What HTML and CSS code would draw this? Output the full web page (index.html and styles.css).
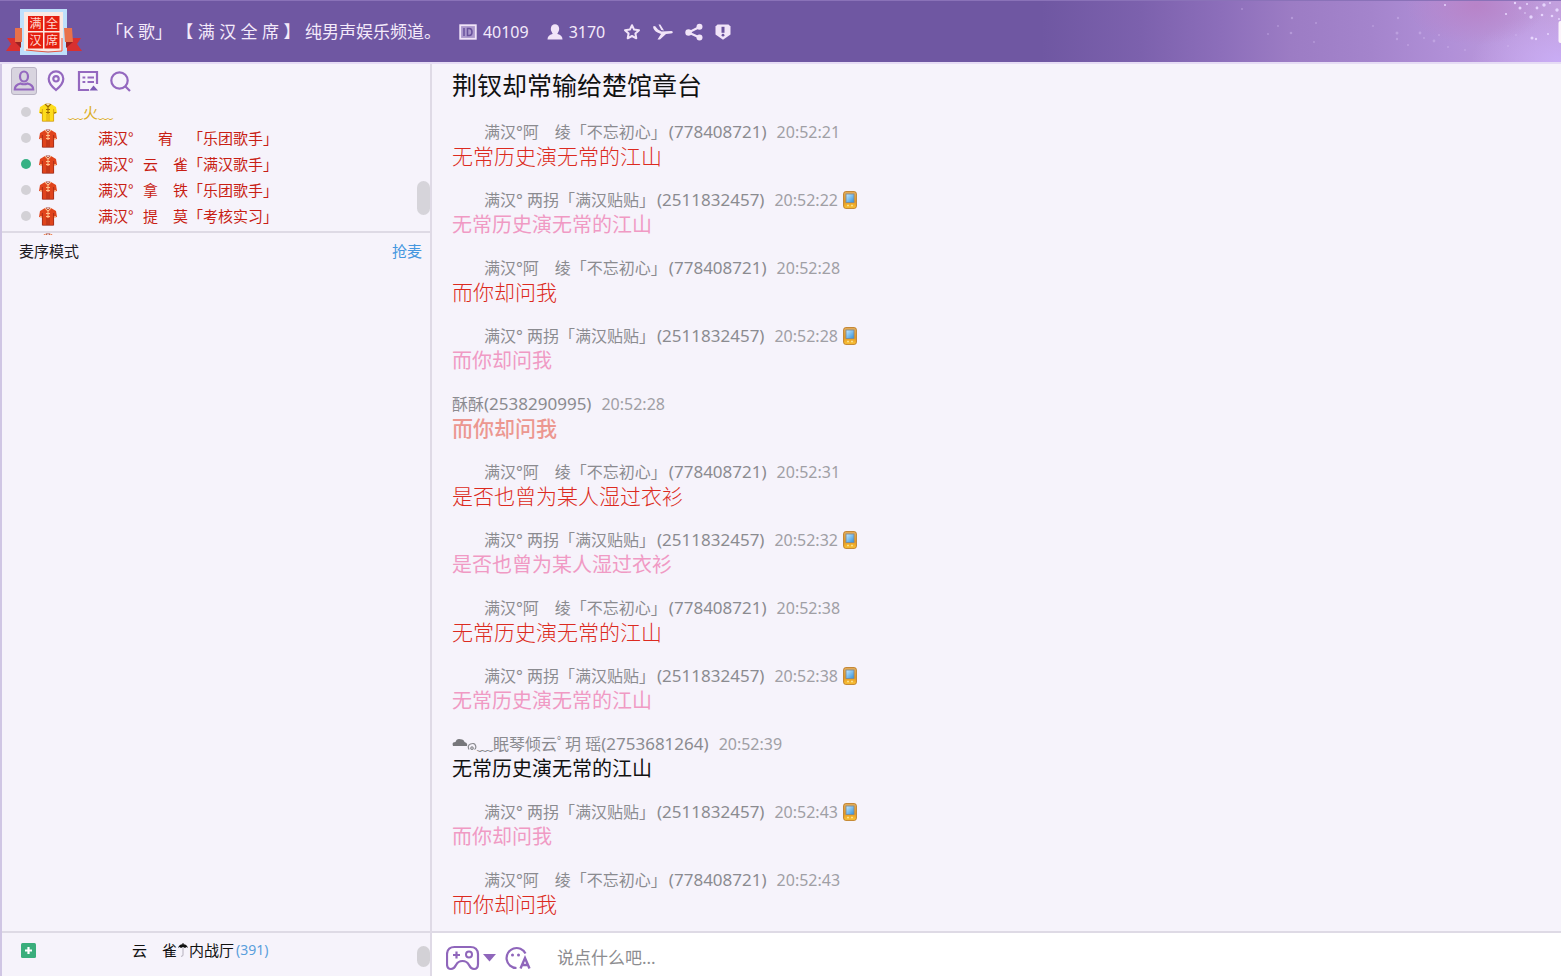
FILE: index.html
```html
<!DOCTYPE html>
<html lang="zh-CN">
<head>
<meta charset="utf-8">
<title>「K歌」【 满 汉 全 席 】纯男声娱乐频道。</title>
<link rel="stylesheet" href="styles.css">
</head>
<body>
<svg class="defs" width="0" height="0" aria-hidden="true">
  <defs>
    <linearGradient id="phoneBody" x1="0" y1="0" x2="0" y2="1"><stop offset="0" stop-color="#e6b060"/><stop offset=".6" stop-color="#e69a22"/><stop offset="1" stop-color="#fbc436"/></linearGradient>
    <linearGradient id="phoneScreen" x1="0" y1="0" x2="1" y2="1"><stop offset="0" stop-color="#c8ebff"/><stop offset="1" stop-color="#2f90dc"/></linearGradient>
  </defs>
  <symbol id="phone" viewBox="0 0 14 18">
    <rect x=".6" y=".6" width="12.8" height="16.8" rx="2.2" fill="url(#phoneBody)" stroke="#c0812c" stroke-width="1"/>
    <rect x="3" y="3" width="8" height="8.5" fill="url(#phoneScreen)" stroke="#7d8a94" stroke-width=".9"/>
    <path d="M4 14.5h2M8 14.5h2" stroke="#fbe08a" stroke-width="1.4"/>
  </symbol>
  <symbol id="shirt" viewBox="0 0 18 19">
    <path d="M6 1 1 4 0 10l3 .6V18h12v-7.4l3-.6-1-6-5-3-3 1.5z" fill="currentColor"/>
    <path class="shirt-shade" d="M3.4 6V18.3h11.200V6M8 11v7M10 11v7" fill="none" stroke-width=".8"/>
    <path class="shirt-trim" d="M6 1.2 9 4l3-2.800M9 4v7M7 6.500h4M7 9.500h4M1 9.500l2 .6M17 9.500l-2 .6" fill="none" stroke-width="1.1"/>
    <path class="shirt-shade" d="M7 .8h4L9 3z" stroke-width=".6"/>
  </symbol>
</svg>

<div class="app">
  <header class="topbar">
    <svg class="sparkles" viewBox="0 0 431 62" preserveAspectRatio="xMaxYMid slice" aria-hidden="true">
      <g fill="#e9d8ff" opacity=".95">
        <circle cx="385" cy="2" r="1.2"/><circle cx="390" cy="7" r="1.5"/><circle cx="397" cy="3" r="1"/><circle cx="401" cy="16" r="1.7"/><circle cx="407" cy="7" r="1.4"/><circle cx="412" cy="14" r="1.3"/><circle cx="414" cy="4" r="1.7"/><circle cx="422" cy="15" r="1.3"/><circle cx="427" cy="9" r="1.7"/><circle cx="420" cy="2" r="1"/><circle cx="402" cy="37" r="1.5"/><circle cx="406" cy="38" r="1.2"/><circle cx="418" cy="33" r="1"/><circle cx="376" cy="13" r="1.1"/><circle cx="315" cy="4" r="1"/><circle cx="429" cy="18" r="1"/><circle cx="395" cy="12" r=".8"/>
      </g>
      <g fill="#d9c2f5" opacity=".4">
        <circle cx="162" cy="17" r="1.2"/><circle cx="161" cy="32" r="1.3"/><circle cx="186" cy="22" r="1"/><circle cx="268" cy="17" r="1.2"/><circle cx="267" cy="32" r="1.5"/><circle cx="267" cy="38" r="1.2"/><circle cx="290" cy="32" r="1.4"/><circle cx="294" cy="37" r="1"/><circle cx="304" cy="40" r="1.4"/><circle cx="309" cy="34" r="1"/><circle cx="318" cy="46" r="1"/><circle cx="278" cy="44" r="1"/><circle cx="148" cy="25" r=".9"/><circle cx="138" cy="33" r=".9"/><circle cx="335" cy="49" r=".9"/><circle cx="386" cy="34" r=".9"/><circle cx="243" cy="25" r=".9"/><circle cx="112" cy="8" r=".9"/><circle cx="184" cy="41" r=".9"/><circle cx="378" cy="45" r="1"/>
      </g>
      <rect x="428.500" y="20" width="5" height="22" rx="2" fill="#fbf3fb"/>
    </svg>
    <svg class="logo" viewBox="0 0 76 48" role="img" aria-label="满汉全席">
      <path d="M0 43 5 36 1 30h15v13zM76 43l-5-7 4-6H60v13z" fill="#d9302f"/>
      <rect x="14" y="1" width="47" height="46" fill="#bfe0fb"/>
      <path d="M9 20h7v14H9zM58 20h8l1 14h-8z" fill="#e9714a"/>
      <path d="m9 34 6 6v-6zM67 34l-7 6v-6z" fill="#9d2022"/>
      <rect x="18" y="4" width="39" height="39" fill="#fbe9e2"/>
      <path d="m20 42 10 1 12 1 14-1V30" fill="none" stroke="#e8553f" stroke-width="1"/>
      <path d="M22 8h15v15H22zM38.500 8h15v15h-15zM22 24.500h15v16H22zM38.500 24.500h15v16h-15z" fill="#e51f10"/>
      <g class="logo-text"><text x="29.500" y="19.500">满</text><text x="46" y="19.500">全</text><text x="29.500" y="37">汉</text><text x="46" y="37">席</text></g>
    </svg>
    <h1 class="channel-name">「K 歌」 【 满 汉 全 席 】 纯男声娱乐频道。</h1>
    <div class="stat">
      <svg width="18" height="16" viewBox="0 0 18 16" aria-hidden="true"><rect x="1.200" y="1.200" width="15.600" height="13.600" fill="#ab97cc" stroke="#f1e4f8" stroke-width="1.800"/><path d="M5 4v8M8.500 4.500v7h1.800q2.700 0 2.700-3.500t-2.700-3.500z" fill="none" stroke="#6a529d" stroke-width="1.500"/></svg>
      <span>40109</span>
    </div>
    <div class="stat">
      <svg width="16" height="16" viewBox="0 0 16 16" fill="#f1e4f8" aria-hidden="true"><ellipse cx="8" cy="5" rx="4.200" ry="4.800"/><path d="M5.500 8h5v2q5 1 5 5.500H.5Q.5 11 5.500 10z"/></svg>
      <span>3170</span>
    </div>
    <nav class="actions" aria-label="频道操作">
      <button type="button" aria-label="收藏"><svg width="18" height="18" viewBox="0 0 18 18"><path d="m9 2.200 2.100 4.400 4.900.6-3.600 3.300.9 4.800L9 13l-4.300 2.300.9-4.800L2 7.200l4.900-.6z" fill="none" stroke="#f1e4f8" stroke-width="2" stroke-linejoin="round"/></svg></button>
      <button type="button" aria-label="飞机"><svg width="20" height="18" viewBox="0 0 20 18" fill="#f1e4f8"><path d="M0 3.500 2 3l3 3.500 3.500 2L18.500 8q1.500.2 1.300 1.500-.3.900-2 1.100L13 11l-6 5.500H4.500L8 11 4.500 9.500Q.5 7.500 0 3.500zM5.500 1.500h1.800l3.700 6-2.700-.6z"/></svg></button>
      <button type="button" aria-label="分享"><svg width="18" height="18" viewBox="0 0 18 18" fill="#f1e4f8"><path d="M3.500 9.500 14.500 4M3.500 9.500l11 5" fill="none" stroke="#f1e4f8" stroke-width="2.200"/><circle cx="3.500" cy="9.500" r="3.200"/><circle cx="14.500" cy="3.800" r="3"/><circle cx="14.500" cy="14.400" r="3"/></svg></button>
      <button type="button" aria-label="举报"><svg width="16" height="18" viewBox="0 0 16 18"><path d="M2.500 1.500h11l2 2v8L8 16.800.5 11.500v-8z" fill="#f1e4f8"/><path d="M8 3.800v6" stroke="#6a529d" stroke-width="3"/><circle cx="8" cy="12.200" r="1.400" fill="#6a529d"/></svg></button>
    </nav>
  </header>

  <aside class="sidebar">
    <nav class="tabs" aria-label="侧栏">
      <button type="button" class="tab tab-active" aria-label="用户"><svg width="22" height="22" viewBox="0 0 22 22"><ellipse cx="11" cy="6.500" rx="4" ry="5"/><path d="M7.500 13.500Q1.800 15 1.800 19.500h18.400q0-4.500-5.700-6-3.500 1.500-7 0z"/></svg></button>
      <button type="button" class="tab" aria-label="位置"><svg width="22" height="22" viewBox="0 0 22 22"><path d="M11 20q-7.300-6-7.300-11.300a7.300 7.300 0 0 1 14.600 0Q18.300 14 11 20z"/><circle cx="11" cy="8.800" r="2.700"/></svg></button>
      <button type="button" class="tab" aria-label="节目单"><svg width="22" height="22" viewBox="0 0 22 22"><path d="M12 20H2V2h18v12M5.500 7.500h2.800M5.500 12h2.800M10.500 7.500H17M10.500 12H17"/><path d="m12.500 20.500 4-5 4.500 5z" fill="#7d5bb5" stroke="none"/></svg></button>
      <button type="button" class="tab" aria-label="搜索"><svg width="22" height="22" viewBox="0 0 22 22"><circle cx="10.500" cy="10.500" r="8.200"/><path d="m16.500 16.500 4.500 4.500"/></svg></button>
    </nav>
    <ul class="members">
      <li class="member"><i class="dot"></i><svg class="shirt shirt-gold"><use href="#shirt"/></svg><span class="member-name member-gold">﹏火﹏</span></li>
      <li class="member"><i class="dot"></i><svg class="shirt"><use href="#shirt"/></svg><span class="member-name">满汉<b class="degree">°</b>　宥　「乐团歌手」</span></li>
      <li class="member"><i class="dot dot-online"></i><svg class="shirt"><use href="#shirt"/></svg><span class="member-name">满汉<b class="degree">°</b>云　雀「满汉歌手」</span></li>
      <li class="member"><i class="dot"></i><svg class="shirt"><use href="#shirt"/></svg><span class="member-name">满汉<b class="degree">°</b>拿　铁「乐团歌手」</span></li>
      <li class="member"><i class="dot"></i><svg class="shirt"><use href="#shirt"/></svg><span class="member-name">满汉<b class="degree">°</b>提　莫「考核实习」</span></li>
      <li class="member"><i class="dot"></i><svg class="shirt"><use href="#shirt"/></svg></li>
      <li class="scroll-thumb" aria-hidden="true"></li>
    </ul>
    <section class="mic">
      <h2 class="mic-title">麦序模式</h2>
      <a class="mic-link" href="#">抢麦</a>
    </section>
    <footer class="room">
      <button type="button" class="add" aria-label="展开"><svg width="15" height="15" viewBox="0 0 15 15"><rect width="15" height="15" rx="1.500" fill="#3aae7c"/><path d="M7.500 4v7M4 7.500h7" stroke="#fff" stroke-width="2.200"/></svg></button>
      <span class="room-name">云　雀<svg class="umbrella" viewBox="0 0 10 16" aria-label="☂"><path d="M0 6q1-3.500 4.500-3.800V1h1v1.200Q9 2.500 10 6L8.500 5 7 6 5 5 3 6 1.500 5z" fill="#111"/><path d="M5 5v8q0 1.500-2 1.300" fill="none" stroke="#b5b0bd"/></svg>内战厅</span><span class="room-count">(391)</span>
      <i class="room-thumb"></i>
    </footer>
  </aside>

  <main class="chat">
    <div class="log">
      <p class="lead">荆钗却常输给楚馆章台</p>
      <article class="msg"><div class="meta indent"><span>满汉°阿　绫「不忘初心」</span><span class="uid">(778408721)</span><time>20:52:21</time></div><p class="red">无常历史演无常的江山</p></article>
      <article class="msg"><div class="meta indent"><span>满汉° 两拐「满汉贴贴」</span><span class="uid">(2511832457)</span><time>20:52:22</time><svg class="phone"><use href="#phone"/></svg></div><p class="pink">无常历史演无常的江山</p></article>
      <article class="msg"><div class="meta indent"><span>满汉°阿　绫「不忘初心」</span><span class="uid">(778408721)</span><time>20:52:28</time></div><p class="red">而你却问我</p></article>
      <article class="msg"><div class="meta indent"><span>满汉° 两拐「满汉贴贴」</span><span class="uid">(2511832457)</span><time>20:52:28</time><svg class="phone"><use href="#phone"/></svg></div><p class="pink">而你却问我</p></article>
      <article class="msg"><div class="meta"><span>酥酥</span><span class="uid">(2538290995)</span><time>20:52:28</time></div><p class="salmon">而你却问我</p></article>
      <article class="msg"><div class="meta indent"><span>满汉°阿　绫「不忘初心」</span><span class="uid">(778408721)</span><time>20:52:31</time></div><p class="red">是否也曾为某人湿过衣衫</p></article>
      <article class="msg"><div class="meta indent"><span>满汉° 两拐「满汉贴贴」</span><span class="uid">(2511832457)</span><time>20:52:32</time><svg class="phone"><use href="#phone"/></svg></div><p class="pink">是否也曾为某人湿过衣衫</p></article>
      <article class="msg"><div class="meta indent"><span>满汉°阿　绫「不忘初心」</span><span class="uid">(778408721)</span><time>20:52:38</time></div><p class="red">无常历史演无常的江山</p></article>
      <article class="msg"><div class="meta indent"><span>满汉° 两拐「满汉贴贴」</span><span class="uid">(2511832457)</span><time>20:52:38</time><svg class="phone"><use href="#phone"/></svg></div><p class="pink">无常历史演无常的江山</p></article>
      <article class="msg"><div class="meta"><span class="with-cloud"><svg class="cloud" viewBox="0 0 25 16" aria-label="☁"><path d="M1 10Q-.5 6 3.500 6 4.500 2.300 8.500 3.200 12 3.500 12.500 6q3.500.8 2.500 4z" fill="#77777b"/><path d="M17 13.500q-2-4 1.500-5.500 4-1.500 5 1.500t-1 4M19 11.500a1.200 1.200 0 1 0 2 0 1.200 1.200 0 0 0-2 0" fill="none" stroke="#8b8b90" stroke-width="1.200"/></svg>﹏眠琴倾云ﾟ玥 瑶</span><span class="uid">(2753681264)</span><time>20:52:39</time></div><p class="black">无常历史演无常的江山</p></article>
      <article class="msg"><div class="meta indent"><span>满汉° 两拐「满汉贴贴」</span><span class="uid">(2511832457)</span><time>20:52:43</time><svg class="phone"><use href="#phone"/></svg></div><p class="pink">而你却问我</p></article>
      <article class="msg"><div class="meta indent"><span>满汉°阿　绫「不忘初心」</span><span class="uid">(778408721)</span><time>20:52:43</time></div><p class="red">而你却问我</p></article>
    </div>
    <form class="composer">
      <button type="button" aria-label="游戏"><svg width="50" height="26" viewBox="0 0 50 26"><path d="M8.500 2h16q7 0 7.500 7v10q0 5-4 5-3 0-5-4t-6.500-4-6.500 4-5 4q-4 0-4-5V9q.5-7 7.500-7z" fill="none" stroke="#8f66bb" stroke-width="2.200"/><path d="M10.500 6.500v7M7 10h7" stroke="#8f66bb" stroke-width="2.200"/><circle cx="23" cy="9.500" r="3" fill="none" stroke="#8f66bb" stroke-width="2"/><path d="M37 9h13l-6.500 7.500z" fill="#8f66bb"/></svg></button>
      <button type="button" aria-label="字体与表情"><svg width="27" height="26" viewBox="0 0 27 26"><path d="M21.500 8.500A10 10 0 1 0 12.500 23" fill="none" stroke="#8f66bb" stroke-width="2.200"/><circle cx="8.500" cy="10" r="1.500" fill="#8f66bb"/><circle cx="14.500" cy="10" r="1.500" fill="#8f66bb"/><path d="m16.500 23.500 4.500-10.500 4.500 10.500M18.500 20h5.500" fill="none" stroke="#8f66bb" stroke-width="2.400"/></svg></button>
      <input type="text" aria-label="消息" placeholder="说点什么吧...">
    </form>
  </main>
</div>
</body>
</html>
```
FILE: styles.css
```css
* { box-sizing: border-box; }

body {
  margin: 0;
  font-family: "Noto Sans", "Noto Sans CJK SC", sans-serif;
  text-spacing-trim: space-all;
  background: #f6f3fb;
}

h1, h2, p, ul { margin: 0; padding: 0; font-weight: 400; }
ul { list-style: none; }
button { display: flex; padding: 0; border: 0; background: none; cursor: pointer; }
svg { display: block; flex: none; }
.defs { position: absolute; }

.app {
  display: grid;
  grid-template: 64px 1fr / 432px 1fr;
  height: 100vh;
  overflow: hidden;
}

/* Top bar */
.topbar {
  position: relative;
  grid-column: 1 / -1;
  display: flex;
  align-items: center;
  padding: 0 8px;
  color: #f4eafa;
  border-top: 1px solid #8a72b8;
  border-bottom: 2px solid #e6dcf5;
  background:
    radial-gradient(ellipse 70px 40px at right 85px top 4px, #b883c8, transparent),
    radial-gradient(ellipse 90px 50px at right 0 bottom 0, #c9adf5, transparent),
    linear-gradient(90deg, transparent calc(100% - 520px), #7c61ad calc(100% - 420px), #8c6eba calc(100% - 340px), #9c7cc4 calc(100% - 270px), #a484cc calc(100% - 190px), #b190d8 calc(100% - 110px), #c3a0de 100%),
    #6f57a2;
}
.sparkles { position: absolute; top: 0; right: 0; width: 431px; height: 62px; }
.logo { width: 76px; height: 48px; margin-left: -2px; }
.logo-text {
  fill: #ffd9cf;
  font: 12px "Noto Sans CJK SC", sans-serif;
  text-anchor: middle;
}
.channel-name { margin-left: 24px; font-size: 17px; line-height: 24px; white-space: pre; }
.stat { display: flex; align-items: center; gap: 6px; margin-left: 18px; font-size: 16px; line-height: 24px; }
.actions { display: flex; align-items: center; gap: 12px; margin-left: 18px; }

/* Sidebar */
.sidebar {
  display: flex;
  flex-direction: column;
  min-height: 0;
  border-left: 2px solid #d0c6e4;
  border-right: 2px solid #dfdae6;
}
.tabs { display: flex; align-items: center; gap: 6px; height: 34px; padding: 0 9px; flex: none; }
.tab { align-items: center; justify-content: center; width: 26px; height: 28px; border-radius: 3px; }
.tab svg { fill: none; stroke: #9468bf; stroke-width: 2.2; }
.tab-active { background: #d8d4df; border: 1px solid #b9b3c4; }

.members { position: relative; height: 137px; padding-top: 1px; flex: none; overflow: hidden; }
.members::after {
  content: "";
  position: absolute;
  left: 0;
  right: 0;
  bottom: 2px;
  height: 2px;
  background: #dedae5;
}
.member { display: flex; align-items: center; height: 26px; padding-left: 19px; }
.dot { width: 10px; height: 10px; border-radius: 50%; background: #d3d1d6; }
.dot-online { background: #36b184; }
.shirt { width: 18px; height: 19px; margin-left: 8px; color: #e0441c; }
.shirt-trim { stroke: var(--trim, #ffc08a); }
.shirt-shade { stroke: var(--shade, #9c2a18); fill: none; }
.shirt-gold { color: #fddc1c; --trim: #9a6a00; --shade: #d09a10; }
.member-name {
  margin-left: 41px;
  color: #c81e14;
  font: 15px/26px "Noto Sans CJK SC", sans-serif;
  white-space: pre;
}
.member-gold { margin-left: 11px; color: #dcae24; }
.degree { display: inline-block; width: 15px; font-weight: 400; }
.scroll-thumb { position: absolute; right: 0; top: 83px; width: 13px; height: 34px; border-radius: 7px; background: #d6d4da; }

.mic {
  flex: 1;
  display: flex;
  justify-content: space-between;
  padding: 4px 8px 0 17px;
  font-size: 15px;
  line-height: 24px;
}
.mic-title { font-size: 15px; color: #1d1a22; }
.mic-link { color: #4597df; text-decoration: none; height: 24px; }

.room {
  position: relative;
  display: flex;
  flex: none;
  height: 45px;
  padding: 7px 0 0 19px;
  border-top: 2px solid #dedae5;
  font-size: 15px;
  line-height: 20px;
}
.add { height: 15px; margin-top: 3px; }
.room-name { display: flex; margin-left: 96px; color: #111; white-space: pre; }
.umbrella { width: 12px; height: 16px; margin-top: 2px; }
.room-count { margin-left: 2px; font-size: 14px; color: #5a9fdc; }
.room-thumb { position: absolute; right: 0; top: 13px; width: 13px; height: 21px; border-radius: 7px; background: #d3d1d6; }

/* Chat */
.chat { display: flex; flex-direction: column; min-width: 0; min-height: 0; }
.log { flex: 1; min-height: 0; overflow: hidden; padding-left: 20px; }
.lead { margin-bottom: 14px; font-size: 25px; line-height: 42px; color: #111; }
.msg { margin-bottom: 20px; }
.meta {
  display: flex;
  align-items: center;
  height: 24px;
  font-size: 16px;
  line-height: 24px;
  color: #8b8b90;
  white-space: pre;
}
.indent { padding-left: 32px; }
.uid { font-size: 17px; }
.indent .uid { margin-left: 2px; }
.meta time { margin-left: 10px; color: #a09fa5; }
.phone { width: 14px; height: 18px; margin-left: 5px; }
.with-cloud { display: flex; }
.cloud { width: 25px; height: 16px; margin-top: 4px; }
.msg p { height: 24px; font-size: 20px; line-height: 26px; }
.msg .red { font-size: 21px; line-height: 24px; font-weight: 300; color: #dc2a20; }
.msg .pink { color: #f09ac4; }
.msg .salmon { font-size: 21px; line-height: 24px; font-weight: 500; color: #ec9790; }
.msg .black { color: #111; }

.composer {
  display: flex;
  align-items: center;
  flex: none;
  height: 45px;
  padding: 7px 14px 0;
  border-top: 2px solid #dedae5;
  background: #fff;
}
.composer button + button { margin-left: 8px; }
.composer input {
  flex: 1;
  margin-left: 26px;
  padding: 0;
  border: 0;
  outline: 0;
  background: none;
  font: 17px/24px "Noto Sans", "Noto Sans CJK SC", sans-serif;
}
.composer input::placeholder { color: #8d8d90; opacity: 1; }
```
